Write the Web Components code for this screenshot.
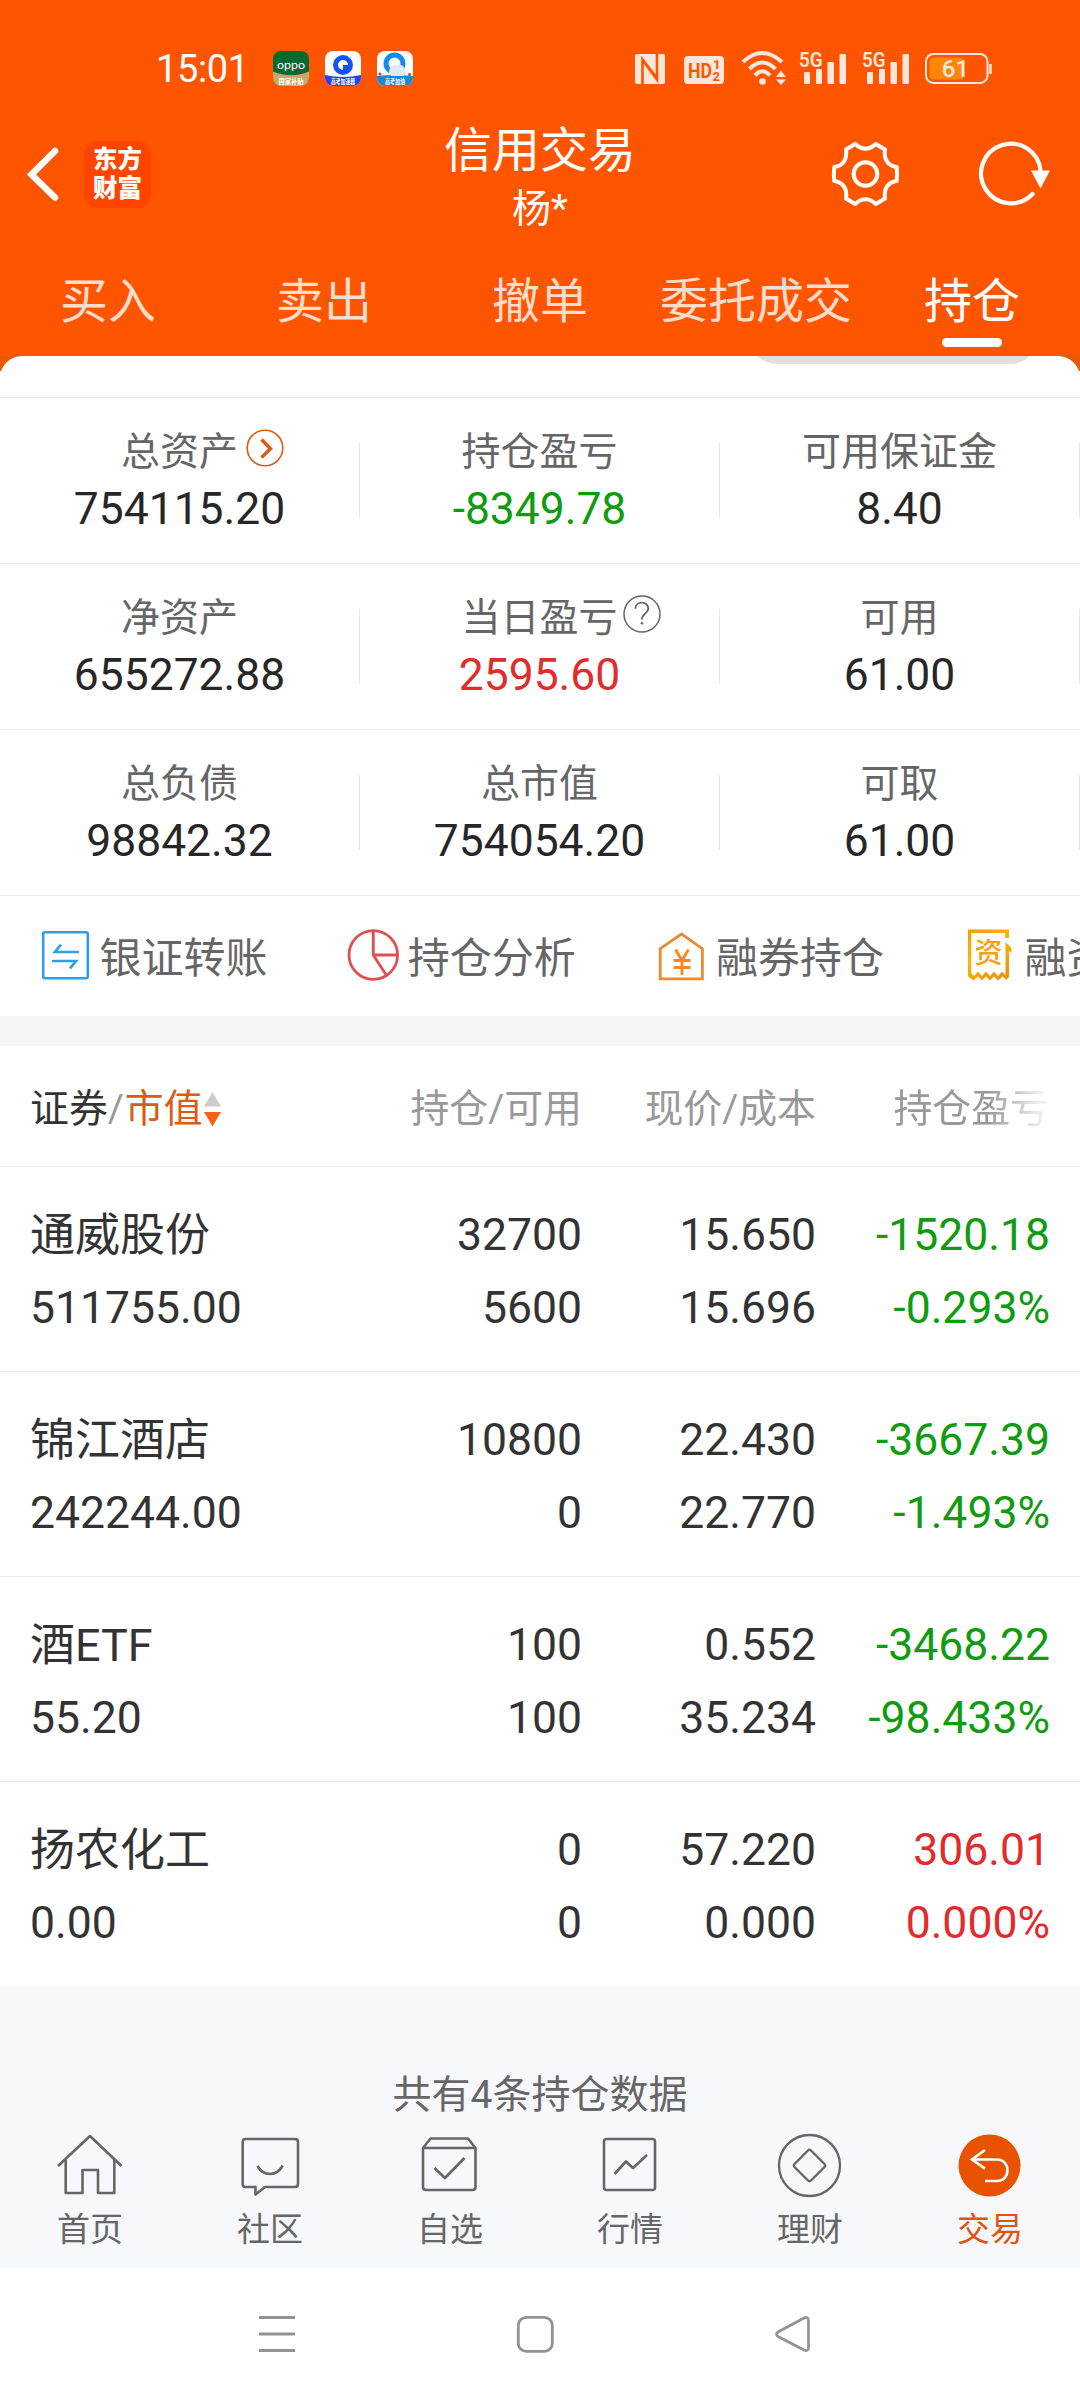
<!DOCTYPE html>
<html lang="zh-CN">
<head>
<meta charset="utf-8">
<title>信用交易</title>
<style>
html,body{margin:0;padding:0}
body{width:1080px;height:2400px;overflow:hidden;background:#fff;color:#333;font-family:Roboto,"Noto Sans CJK SC",sans-serif;font-weight:400}
</style>
</head>
<body>
<trade-app></trade-app>
<script>
const define=(name,render)=>customElements.define(name,class extends HTMLElement{
  connectedCallback(){
    if(this.shadowRoot)return;
    const t=document.createElement('template');
    t.innerHTML='<style>:host{display:block;box-sizing:border-box}*{box-sizing:border-box}svg{display:block;flex:none;overflow:visible}</style>'+render(k=>this.getAttribute(k)||'',this);
    this.attachShadow({mode:'open'}).appendChild(t.content.cloneNode(true));
  }
});

const icons={
  more:`<svg width="38" height="38" viewBox="-19 -19 38 38" fill="none" stroke="#d95b14"><circle r="17.8" stroke-width="1.6"/><path d="M-3.5-8.5 5.5 .8-3.5 9.5" stroke-width="3.4"/></svg>`,
  help:`<svg width="38" height="38" viewBox="-19 -19 38 38" fill="none" stroke="#666" stroke-width="1.5"><circle r="18"/><path d="M-6.7-5.2C-6.4-13.5 6.4-13.5 6.3-5C6.2-1-.3 0-.3 5.6" stroke-width="1.8"/><circle cy="9.3" r="1.3" fill="#666" stroke="none"/></svg>`,
  transfer:`<svg width="52" height="52" viewBox="0 0 52 52" fill="none" stroke="#2f9fe8" stroke-width="2.6"><rect x="4.2" y="3.2" width="44.6" height="46" rx="2"/><path d="M40 23H16L22 15.600M13 32H37L31 39.400" stroke-width="2.7"/></svg>`,
  pie:`<svg width="52" height="52" viewBox="0 0 52 52" fill="none" stroke="#e15050" stroke-width="2.800"><circle cx="26.300" cy="26" r="24.300"/><path d="M26.300 1V26H51M26.300 26 39.500 46.500"/></svg>`,
  house:`<svg width="52" height="52" viewBox="0 0 52 52" fill="none" stroke="#e98b32" stroke-width="2.800"><path d="M5.200 49.800V19.700L26.500 5 47.400 19.700V49.800Z"/><path d="M20.500 20.500 27 31.500 33.500 20.500M18.500 31.500H35.500M18.500 38.500H35.500M27 31.500V46" stroke="#ff8519"/></svg>`,
  bill:`<svg width="52" height="52" viewBox="0 0 52 52"><defs><linearGradient id="g" x2=".6" y2="1"><stop stop-color="#f59c0e"/><stop offset=".5" stop-color="#fbb40b"/><stop offset="1" stop-color="#ed9410"/></linearGradient></defs><path d="M5 .5H46V9H42V4H8.200V44L11 47 15 42.500 19 47 23 42.500 27 47 31 42.500 35 47 39 42.500 42.500 46V13L48.500 19V24L46 22V48L43.500 51 39.500 47.500 35 51.500 31 47.500 27 51.500 23 47.500 19 51.500 15 47.500 10.500 51.500 5 47.500Z" fill="url(#g)"/><text x="25.500" y="34" text-anchor="middle" font-family="Noto Sans CJK SC,sans-serif" font-size="28" font-weight="500" fill="#f7a010">资</text></svg>`,
  home:`<svg width="66" height="66" viewBox="-33 -33 66 66" fill="none" stroke="#666" stroke-width="2.600" stroke-linejoin="round"><path d="M-32-2 0-32 31.500-2M-24.300-8V25H-7.500V2H8V25H24.300V-8"/></svg>`,
  chat:`<svg width="66" height="66" viewBox="-33 -33 66 66" fill="none" stroke="#666" stroke-width="2.600" stroke-linejoin="round"><path d="M-24.500-29H25Q28-29 28-26V16Q28 19 25 19H-5L-14.500 26.500V19H-24.500Q-27.300 19-27.300 16V-26Q-27.300-29-24.500-29Z"/><path d="M-12.500-2Q-8 6 0 6T12.800-2.500"/></svg>`,
  check:`<svg width="66" height="66" viewBox="-33 -33 66 66" fill="none" stroke="#666" stroke-width="2.600" stroke-linejoin="round"><path d="M-27-20-19.500-29.500H18L25.500-20V19Q25.500 22 22.500 22H-24Q-27 22-27 19ZM-27-20H25.500"/><path d="M-15.500 0-5 10 14.500-10"/></svg>`,
  chart:`<svg width="66" height="66" viewBox="-33 -33 66 66" fill="none" stroke="#666" stroke-width="2.600" stroke-linejoin="round"><rect x="-26" y="-29" width="51" height="51" rx="2.500"/><path d="M-15.500 6-4-6.500 3 0 17-13"/></svg>`,
  coin:`<svg width="66" height="66" viewBox="-33 -33 66 66" fill="none" stroke="#666" stroke-width="2.300" stroke-linejoin="round"><circle cx="-.500" cy="-2.500" r="30.500"/><path d="M-2-17.500Q-.500-19 1-17.500L14.500-4Q16-2.500 14.500-1L1 12.500Q-.500 14-2 12.500L-15.500-1Q-17-2.500-15.500-4Z"/></svg>`,
  trade:`<svg width="66" height="66" viewBox="-33 -33 66 66"><circle cx="-.500" cy="-2.500" r="31" fill="#e85200"/><path d="M-5-18-18-8.500-5 .700M-17-8.500H7C21-8.500 21 13 7 13H-5" fill="none" stroke="#fff" stroke-width="2.700"/></svg>`
};
const signal=`<svg width="46" height="34" viewBox="0 0 46 34" fill="#ffe6da"><text x="-1" y="15.500" font-family="Roboto,sans-serif" font-weight="600" font-size="20.500" textLength="23.500" lengthAdjust="spacingAndGlyphs">5G</text><rect x="4" y="21" width="6" height="12" rx="1"/><rect x="16" y="18" width="6" height="15" rx="1"/><rect x="27.500" y="11" width="6.500" height="22" rx="1"/><rect x="39.500" y="3" width="6.500" height="30" rx="1"/></svg>`;

define('status-bar',()=>`<style>
:host{height:116px;display:flex;align-items:flex-start;padding:51px 88px 0 156px;color:#fff}
.time{font:400 38px/36px Roboto;letter-spacing:-.4px;width:117px}
.apps{display:flex;gap:16px}.sys{display:flex;margin-left:auto}
</style>
<span class="time">15:01</span>
<div class="apps">
<svg width="36" height="36" viewBox="0 0 36 36"><clipPath id="c"><rect width="36" height="35" rx="8"/></clipPath><g clip-path="url(#c)"><rect width="36" height="36" fill="#066a31"/><path d="M0 20.500Q18 28 36 20.500V36H0Z" fill="#c9a96b"/></g><text x="4" y="17.500" font-family="Lato,sans-serif" font-size="12" font-weight="400" fill="#fff" textLength="28" lengthAdjust="spacingAndGlyphs">oppo</text><text x="18" y="32.500" text-anchor="middle" font-family="Noto Sans CJK SC,sans-serif" font-size="6.300" font-weight="700" fill="#fff">国家补贴</text></svg>
<svg width="36" height="36" viewBox="0 0 36 36"><clipPath id="d"><rect width="36" height="35" rx="8"/></clipPath><g clip-path="url(#d)"><rect width="36" height="36" fill="#fff"/><path d="M0 24Q18 28 36 24V36H0Z" fill="#2d3fe8"/></g><circle cx="18" cy="14" r="7.500" fill="none" stroke="#1453f5" stroke-width="5"/><path d="M18 14h5v5h-5Z" fill="#1453f5"/><text x="18" y="33.200" text-anchor="middle" font-family="Noto Sans CJK SC,sans-serif" font-size="6.300" font-weight="700" fill="#fff" textLength="24" lengthAdjust="spacingAndGlyphs">高考加速器</text></svg>
<svg width="36" height="36" viewBox="0 0 36 36"><clipPath id="e"><rect width="36" height="35" rx="8"/></clipPath><g clip-path="url(#e)"><rect width="36" height="36" fill="#fff"/><path d="M0 25Q18 23 36 25V36H0Z" fill="#178bd8"/></g><circle cx="17.500" cy="12.500" r="8.500" fill="none" stroke="#168bed" stroke-width="5"/><path d="M12 20a7 7 0 0 1 8-6 6 6 0 0 1 8 5q3 5-3 6H15q-4-1-3-5Z" fill="#dfe9f2"/><circle cx="3" cy="23" r="1.500" fill="#d33c2d"/><circle cx="32.500" cy="23.500" r="1.500" fill="#d33c2d"/><text x="18" y="33" text-anchor="middle" font-family="Noto Sans CJK SC,sans-serif" font-size="6.300" font-weight="700" fill="#fff" textLength="20" lengthAdjust="spacingAndGlyphs">高考加油</text></svg>
</div>
<div class="sys">
<svg style="margin-right:19px" width="30" height="34" viewBox="0 0 30 34"><rect y="3" width="30" height="30" rx="2" fill="#ffe6da"/><path d="M7.500 33V8.500L21.500 26.500M22 3V28.500L9 11" fill="none" stroke="#ff5500" stroke-width="2.600"/></svg>
<svg style="margin-right:18px" width="40" height="34" viewBox="0 0 40 34"><rect y="5" width="40" height="28" rx="4" fill="#ffe6da"/><g fill="#ff5500" font-family="Roboto,sans-serif" font-weight="700"><text x="4" y="27" font-size="21" textLength="24" lengthAdjust="spacingAndGlyphs">HD</text><text x="29" y="18" font-size="13">1</text><text x="28.500" y="29.500" font-size="13">2</text></g></svg>
<svg style="margin-right:14px" width="44" height="34" viewBox="0 0 44 34"><g fill="none" stroke="#ffe6da" stroke-width="4"><path d="M1 11Q20-7 40 11M7.500 18Q20 5 33.500 18M13 24.500Q20 16 28 24.500"/></g><g fill="#ffe6da"><circle cx="20.500" cy="30.500" r="3.300"/><path d="M34 26 39 19.500 44 26ZM34 28.500 39 34 44 28.500Z"/></g></svg>
<span style="margin-right:17px">${signal}</span><span style="margin-right:16px">${signal}</span>
<svg width="67" height="34" viewBox="0 0 67 34"><rect x="1" y="3" width="61.500" height="29" rx="7.500" fill="none" stroke="#ffe6da" stroke-width="2"/><path d="M9 6.500H38V28.500H9Q4.500 28.500 4.500 24V11Q4.500 6.500 9 6.500Z" fill="#ff8708"/><path d="M65.500 13V23" stroke="#ffe6da" stroke-width="2.500"/><text x="30.500" y="26" text-anchor="middle" font-family="Roboto,sans-serif" font-weight="500" font-size="24" fill="#ffe6da">61</text></svg>
</div>`);

define('title-bar',()=>`<style>
:host{height:124px;display:grid;grid-template-columns:1fr 1fr 1fr;color:#fff;padding-top:7px}
.left{display:flex;padding:18px 0 0 26px;gap:24px}
.logo{width:67px;height:67px;border-radius:14px;background:#ff4400;font:900 24.500px/29px "Noto Sans CJK SC";text-align:center;padding-top:2px}
.mid{text-align:center}.t{font-size:48px;line-height:56px}.s{font-size:39px;line-height:46px;margin-top:7px}
.right{display:flex;justify-content:flex-end;padding:17px 28px 0 0;gap:78px}
</style>
<div class="left"><svg width="34" height="66" viewBox="0 0 34 66" fill="none" stroke="#fff" stroke-width="6.500" stroke-linecap="round" stroke-linejoin="miter"><path d="M29 10 5.500 33.500 29 56.500"/></svg><div class="logo">东方<br>财富</div></div>
<div class="mid"><div class="t">信用交易</div><div class="s">杨*</div></div>
<div class="right"><svg width="68" height="68" viewBox="-33.500 -34 68 68" fill="none" stroke="#fff" stroke-width="4" stroke-linejoin="round"><circle r="11.800"/><path d="M-10.300-30Q0-20.500 10.300-30L19.500-24.500C18-14 23-8 31.200-7Q32 0 31.200 7C23 8 18 14 19.500 24.500L10.300 30Q0 20.500-10.300 30L-19.500 24.500C-18 14-23 8-31.200 7Q-32 0-31.200-7C-23-8-18-14-19.500-24.500Z"/></svg>
<svg width="74" height="68" viewBox="-33 -34 74 68"><path d="M29.600-3A29.800 29.800 0 1 0 21.500 20" fill="none" stroke="#fff" stroke-width="4.200" stroke-linecap="round"/><path d="M20-3.500H39L29.500 14.500Z" fill="#fff"/></svg></div>`);

define('trade-tab',(a)=>`<style>
:host{flex:1;display:flex;flex-direction:column;align-items:center;font-size:48px;line-height:58px;padding-top:33px;color:#ffdccc}
:host([active]){color:#fff}i{display:none;width:60px;height:9px;border-radius:5px;background:#fff;margin-top:7px}:host([active]) i{display:block}
</style><slot></slot><i></i>`);

define('trade-header',()=>`<style>:host{background:#ff5500;height:356px}nav{display:flex}</style>
<status-bar></status-bar><title-bar></title-bar><nav><trade-tab>买入</trade-tab><trade-tab>卖出</trade-tab><trade-tab>撤单</trade-tab><trade-tab>委托成交</trade-tab><trade-tab active>持仓</trade-tab></nav>`);

define('asset-cell',a=>`<style>
:host{flex:1;display:flex;align-items:flex-start;padding-top:28px;height:165px}
.b{flex:1;text-align:center}.l{display:flex;justify-content:center;align-items:center;font-size:39px;line-height:52px;color:#666}
.l svg{margin:-8px -46px 0 8px}.l svg.help{margin:-8px -43px 0 5px}
.v{font-size:44.400px;line-height:58px;color:#272727;margin-top:2px}.g{color:#0f9c10}.r{color:#e22b2b}hr{border:0;margin:17px 0 0;width:1px;height:75px;background:#e7e7e7}
</style><div class="b"><div class="l"><slot></slot>${a('icon')?icons[a('icon')].replace('<svg','<svg class="'+a('icon')+'"'):''}</div><div class="v ${a('tone')}">${a('value')}</div></div><hr>`);

define('asset-row',()=>`<style>:host{display:flex;border-top:1px solid #ececec;height:166px}</style><slot></slot>`);

define('quick-link',a=>`<style>:host{flex:0 0 308.300px;display:flex;align-items:center;gap:9px;font-size:42px;line-height:50px;color:#666;white-space:nowrap}span{margin-top:5px}svg{margin-top:-2px}</style>${icons[a('icon')]}<span><slot></slot></span>`);

define('holding-head',()=>`<style>
:host{height:120px;display:grid;grid-template-columns:348px 204px 234px 234px;padding:5px 30px 0;align-items:center;font-size:38.900px;color:#999;line-height:50px}
div{text-align:right;white-space:nowrap}.n{display:flex;align-items:center}.n b{font-weight:400;color:#333}.n em{font-style:normal;color:#dd5a10;margin-left:1px}.n svg{margin-left:1px}
.f{padding-right:1px;-webkit-mask-image:linear-gradient(90deg,#000 73%,rgba(0,0,0,.1) 98%);mask-image:linear-gradient(90deg,#000 73%,rgba(0,0,0,.1) 98%)}
</style><div class="n"><b>证券</b>/<em>市值</em><svg width="17" height="36" viewBox="0 0 17 36"><path d="M8.500 1 17 15.500H0Z" fill="#ccc"/><path d="M0 21H17L8.500 35.500Z" fill="#f96414"/></svg></div><div>持仓/可用</div><div>现价/成本</div><div class="f">持仓盈亏</div>`);

define('holding-row',a=>`<style>
:host{height:205px;border-top:1px solid #ececec;display:grid;grid-template-columns:348px 204px 234px 234px;padding:32px 30px 0;font-size:44.500px;line-height:73px;color:#333}
div{text-align:right;white-space:nowrap}.n{text-align:left}.n slot{display:block;height:73px;font-size:45px}
.g{color:#0f9c10}.r{color:#e22b2b}
</style><div class="n"><slot></slot>${a('worth')}</div><div>${a('qty').replace('|','<br>')}</div><div>${a('price').replace('|','<br>')}</div><div class="${a('tone')}">${a('pl').replace('|','<br>')}</div>`);

define('tab-item',a=>`<style>
:host{flex:1;display:flex;flex-direction:column;align-items:center;font-size:33px;line-height:40px;color:#666}:host([active]){color:#dd5510}
span{margin-top:9px}</style>${icons[a('icon')]}<span><slot></slot></span>`);

define('system-nav',()=>`<style>:host{height:132px;display:grid;grid-template-columns:258px 258px 258px 1fr;background:#fff;padding:47px 24px 0 19px}div{display:flex;justify-content:flex-end}</style>
<div><svg width="38" height="38" viewBox="0 0 38 38" stroke="#929292" stroke-width="3"><path d="M20 2.500H56M20 19H56M20 35.500H56"/></svg></div>
<div><svg width="38" height="38" viewBox="0 0 38 38" fill="none" stroke="#929292" stroke-width="2.800"><rect x="21.300" y="2.400" width="34" height="34" rx="8"/></svg></div>
<div><svg width="38" height="38" viewBox="0 0 38 38" fill="none" stroke="#929292" stroke-width="2.700"><path d="M23 17 49 3Q53.500 1 53.500 6V32Q53.500 37 49 35L23 21.500Q20 19.200 23 17Z"/></svg></div>`);

define('trade-app',()=>`<style>
:host{width:1080px;height:2400px;background:#fff;overflow:hidden}
.top{background:linear-gradient(#e65a05 15px,#fff 15px);height:41px}.sheet{background:#fff;border-radius:22px 22px 0 0;height:41px;overflow:hidden;display:flex;justify-content:flex-end;padding-right:41px}
.pill{width:291px;height:58px;margin-top:-50px;border-radius:29px;background:#e0e0e0}
.links{display:flex;border-top:1px solid #ececec;height:121px;padding-left:38.500px;overflow:hidden}
.gap{height:30px;background:#f6f7fa}
.foot{background:#f7f8fb;height:282px;padding-top:84px}.count{font-size:39px;line-height:50px;text-align:center;color:#666}
.tabs{display:flex;margin-top:15px}
</style>
<trade-header></trade-header>
<div class="top"><div class="sheet"><div class="pill"></div></div></div>
<asset-row><asset-cell value="754115.20" icon="more">总资产</asset-cell><asset-cell value="-8349.78" tone="g">持仓盈亏</asset-cell><asset-cell value="8.40">可用保证金</asset-cell></asset-row>
<asset-row><asset-cell value="655272.88">净资产</asset-cell><asset-cell value="2595.60" tone="r" icon="help">当日盈亏</asset-cell><asset-cell value="61.00">可用</asset-cell></asset-row>
<asset-row><asset-cell value="98842.32">总负债</asset-cell><asset-cell value="754054.20">总市值</asset-cell><asset-cell value="61.00">可取</asset-cell></asset-row>
<div class="links"><quick-link icon="transfer">银证转账</quick-link><quick-link icon="pie">持仓分析</quick-link><quick-link icon="house">融券持仓</quick-link><quick-link icon="bill">融资</quick-link></div>
<div class="gap"></div>
<holding-head></holding-head>
<holding-row worth="511755.00" qty="32700|5600" price="15.650|15.696" pl="-1520.18|-0.293%" tone="g">通威股份</holding-row>
<holding-row worth="242244.00" qty="10800|0" price="22.430|22.770" pl="-3667.39|-1.493%" tone="g">锦江酒店</holding-row>
<holding-row worth="55.20" qty="100|100" price="0.552|35.234" pl="-3468.22|-98.433%" tone="g">酒ETF</holding-row>
<holding-row worth="0.00" qty="0|0" price="57.220|0.000" pl="306.01|0.000%" tone="r">扬农化工</holding-row>
<div class="foot"><div class="count">共有4条持仓数据</div><div class="tabs"><tab-item icon="home">首页</tab-item><tab-item icon="chat">社区</tab-item><tab-item icon="check">自选</tab-item><tab-item icon="chart">行情</tab-item><tab-item icon="coin">理财</tab-item><tab-item icon="trade" active>交易</tab-item></div></div>
<system-nav></system-nav>`);
</script>
</body>
</html>
